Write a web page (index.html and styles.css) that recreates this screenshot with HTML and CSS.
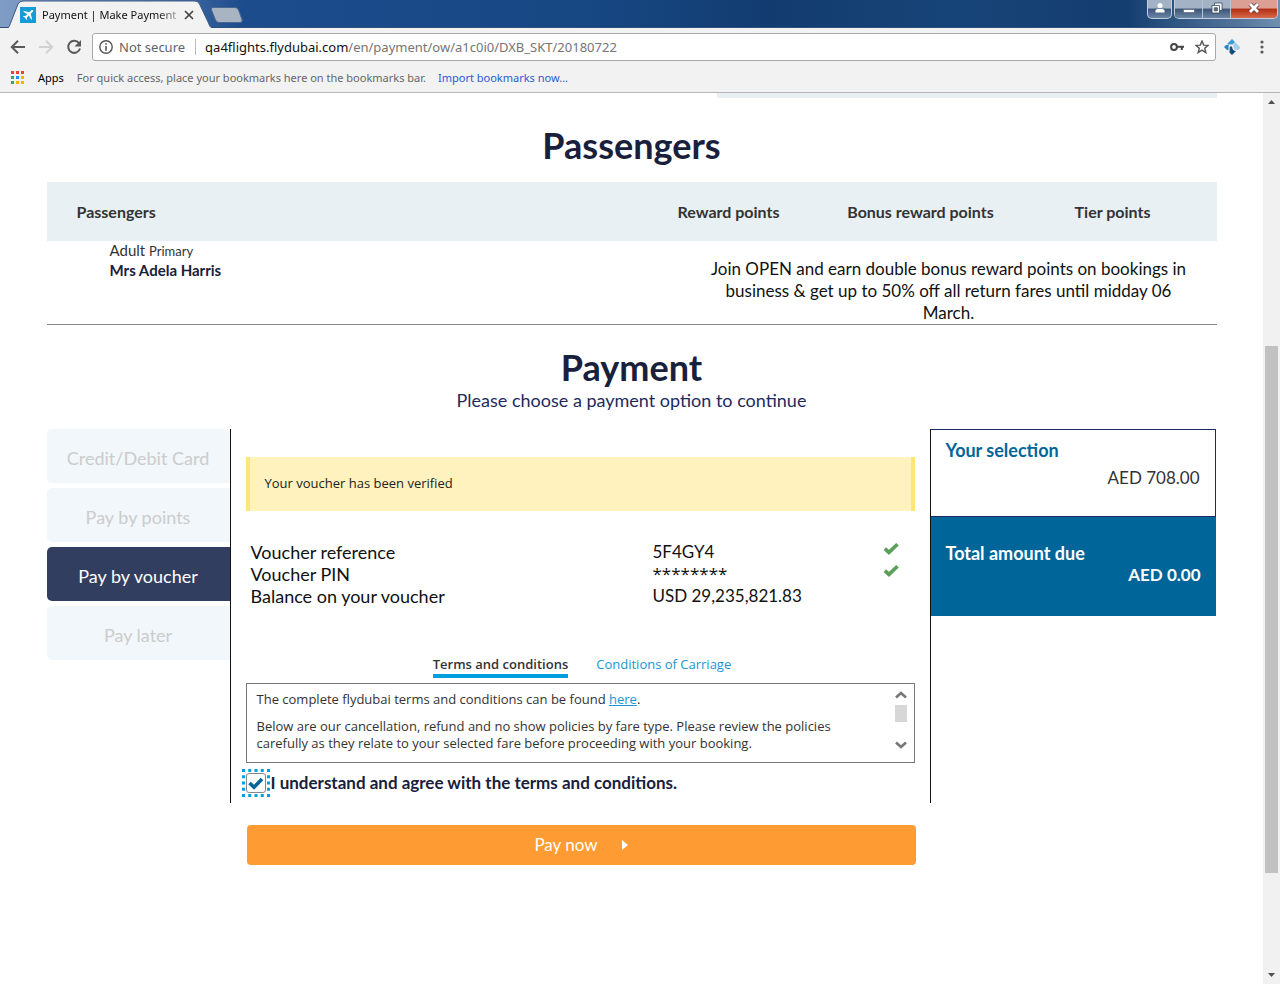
FILE: index.html
```html
<!DOCTYPE html>
<html lang="en">
<head>
<meta charset="utf-8">
<title>Payment | Make Payment</title>
<link rel="stylesheet" href="styles.css">
</head>
<body>
<header class="browser">
  <div class="titlebar">
    <div class="tab">
      <svg class="tab-shape" viewBox="0 0 212 28" aria-hidden="true"><path d="M0 29C5 29 5 27 7 22L14 4Q15.500 1 19 1H191Q194 1 195.500 4L204 22C206 27 207 29 212 29Z" fill="#f2f2f2" stroke="#3b5a85" stroke-width="1"/></svg>
      <svg class="favicon" viewBox="0 0 16 16" aria-hidden="true"><rect width="16" height="16" fill="#129cd8"/><path d="M13 3.200C12.400 2.600 11.500 3 11 3.500L9.300 5.200 4 4 3.200 4.800 7.400 7.100 5.400 9.100 3.700 8.900 3 9.600 5.200 10.800 6.400 13 7.100 12.300 6.900 10.600 8.900 8.600 11.200 12.800 12 12 10.800 6.700 12.500 5C13 4.500 13.500 3.800 13 3.200Z" fill="#fff"/></svg>
      <span class="tab-title">Payment | Make Payment</span>
      <button class="tab-close" aria-label="Close tab"><svg viewBox="0 0 10 10"><path d="M1 1 9 9M9 1 1 9" stroke="#444" stroke-width="1.700"/></svg></button>
    </div>
    <button class="new-tab" aria-label="New tab"><svg viewBox="0 0 34 16"><path d="M3 .5H25Q27.500.500 28.500 3L32 12.500Q33 15.500 30 15.500H9Q6.500 15.500 5.500 13L1.500 3Q.500.500 3 .5Z" fill="#a9b4c2" stroke="#4a668f"/></svg></button>
    <div class="window-buttons">
      <button class="win user" aria-label="User"><svg viewBox="0 0 12 12"><circle cx="6" cy="3.500" r="2.500" fill="#fff"/><path d="M1.500 10.500V8.500Q1.500 7 4 7H8Q10.500 7 10.500 8.500V10.500Z" fill="#fff"/></svg></button>
      <div class="win-group">
        <button class="win" aria-label="Minimize"><svg viewBox="0 0 12 12"><path d="M.5 7.500H11.500V10.500H.5Z" fill="#fff" stroke="#48586e" stroke-width=".6"/></svg></button>
        <button class="win" aria-label="Restore"><svg viewBox="0 0 12 12"><path d="M3.500 1H11V8.500H8.500V11H1V3.500H3.500Z" fill="#fff" stroke="#33445c" stroke-width=".8"/><path d="M3.500 3.500H8.500V8.500" fill="none" stroke="#33445c" stroke-width=".8"/><path d="M3.300 5.800H6.300V8.800H3.300Z" fill="#5d728f" stroke="#33445c" stroke-width=".8"/></svg></button>
        <button class="win close" aria-label="Close window"><svg viewBox="0 0 12 12"><path d="M2 2 10 10M10 2 2 10" stroke="#5a3038" stroke-width="4.400"/><path d="M2 2 10 10M10 2 2 10" stroke="#fff" stroke-width="3"/></svg></button>
      </div>
    </div>
  </div>
  <div class="toolbar">
    <button class="nav" aria-label="Back"><svg viewBox="0 0 16 16"><path d="M15 8H2M8 1.800 1.800 8 8 14.200" fill="none" stroke="#5a5a5a" stroke-width="2"/></svg></button>
    <button class="nav" aria-label="Forward"><svg viewBox="0 0 16 16"><path d="M1 8H14M8 1.800 14.200 8 8 14.200" fill="none" stroke="#d2d2d2" stroke-width="2"/></svg></button>
    <button class="nav" aria-label="Reload"><svg viewBox="0 0 16 16"><path d="M13 4.200A6 6 0 1 0 14 9.500" fill="none" stroke="#5a5a5a" stroke-width="2"/><path d="M15 1V7.500H8.500Z" fill="#5a5a5a"/></svg></button>
    <div class="address">
      <svg class="icon" viewBox="0 0 14 14" aria-hidden="true"><circle cx="7" cy="7" r="6.200" fill="none" stroke="#555" stroke-width="1.400"/><path d="M7 6V10.700M7 3.200V4.800" stroke="#555" stroke-width="1.600"/></svg>
      <span class="security">Not secure</span>
      <span class="url"><b>qa4flights.flydubai.com</b>/en/payment/ow/a1c0i0/DXB_SKT/20180722</span>
      <svg class="icon" viewBox="0 0 14 14" aria-hidden="true"><circle cx="4" cy="7" r="2.900" fill="none" stroke="#444" stroke-width="2"/><path d="M6.500 6.800H14M11.800 7V10" fill="none" stroke="#444" stroke-width="2"/></svg>
      <svg class="icon star" viewBox="0 0 14 14" aria-hidden="true"><path d="M7 1 8.700 5.100 13.100 5.400 9.700 8.200 10.800 12.600 7 10.200 3.200 12.600 4.300 8.200.9 5.400 5.300 5.100Z" fill="none" stroke="#555" stroke-width="1.400"/></svg>
    </div>
    <svg class="extension" viewBox="0 0 16 16" aria-hidden="true"><path d="M3.500 4.500 8 0 11 3 8.500 5.500H3.500Z" fill="#3d9bd4"/><path d="M8 0 16 8Q16 11 13 11 10 11 9.500 8V5.500L11 3Z" fill="#a3cdea"/><path d="M0 8 2 6H5Q4 8 4.500 11H3Z" fill="#2585c4"/><path d="M5.800 7.500H8Q8.500 12 12 12L8 16 5.500 13.500Z" fill="#134d80"/></svg>
    <button class="menu" aria-label="Menu"><svg viewBox="0 0 4 14"><circle cx="2" cy="2" r="1.600"/><circle cx="2" cy="7" r="1.600"/><circle cx="2" cy="12" r="1.600"/></svg></button>
  </div>
  <nav class="bookmarks" aria-label="Bookmarks">
    <svg class="apps" viewBox="0 0 13 13" aria-hidden="true"><path d="M0 0h3v3H0zM5 0h3v3H5zM10 0h3v3h-3z" fill="#ea4335"/><path d="M0 5h3v3H0zM0 10h3v3H0z" fill="#34a853"/><path d="M5 5h3v3H5z" fill="#2b8cf0"/><path d="M10 5h3v3h-3zM5 10h3v3H5zM10 10h3v3h-3z" fill="#fbaf08"/></svg>
    <span class="apps-label">Apps</span>
    <span>For quick access, place your bookmarks here on the bookmarks bar.</span>
    <a href="#">Import bookmarks now...</a>
  </nav>
</header>
<div class="viewport">
  <main class="page">
    <div class="container">
      <div class="strip"></div>
      <h1>Passengers</h1>
      <table class="passengers">
        <thead><tr><th scope="col">Passengers</th><th scope="col">Reward points</th><th scope="col">Bonus reward points</th><th scope="col">Tier points</th></tr></thead>
        <tbody><tr>
          <td class="person">Adult <small>Primary</small><br><strong>Mrs Adela Harris</strong></td>
          <td class="promo" colspan="3">Join OPEN and earn double bonus reward points on bookings in business &amp; get up to 50% off all return fares until midday 06 March.</td>
        </tr></tbody>
      </table>
      <h1 class="payment-title">Payment</h1>
      <p class="lead">Please choose a payment option to continue</p>
      <div class="payment">
        <div class="methods">
          <button class="method" disabled>Credit/Debit Card</button>
          <button class="method" disabled>Pay by points</button>
          <button class="method active">Pay by voucher</button>
          <button class="method" disabled>Pay later</button>
        </div>
        <section class="panel">
          <p class="notice" role="status">Your voucher has been verified</p>
          <table class="voucher">
            <tr><th scope="row">Voucher reference</th><td>5F4GY4</td><td class="ok"><svg viewBox="0 0 14 12"><path d="M1.600 5.700 5.200 9 12.700 1.800" fill="none" stroke="#5b9f5b" stroke-width="3.200"/></svg></td></tr>
            <tr><th scope="row">Voucher PIN</th><td class="pin">********</td><td class="ok"><svg viewBox="0 0 14 12"><path d="M1.600 5.700 5.200 9 12.700 1.800" fill="none" stroke="#5b9f5b" stroke-width="3.200"/></svg></td></tr>
            <tr><th scope="row">Balance on your voucher</th><td>USD 29,235,821.83</td><td></td></tr>
          </table>
          <div class="term-tabs">
            <button class="term-tab selected">Terms and conditions</button>
            <button class="term-tab">Conditions of Carriage</button>
          </div>
          <div class="terms">
            <div class="terms-text">
              <p>The complete flydubai terms and conditions can be found <a href="#">here</a>.</p>
              <p>Below are our cancellation, refund and no show policies by fare type. Please review the policies carefully as they relate to your selected fare before proceeding with your booking.</p>
            </div>
            <div class="terms-scroll" aria-hidden="true">
              <svg viewBox="0 0 12 8"><path d="M1 6.500 6 2 11 6.500" fill="none" stroke="#777" stroke-width="2.600"/></svg>
              <span></span>
              <svg viewBox="0 0 12 8"><path d="M1 1.500 6 6 11 1.500" fill="none" stroke="#777" stroke-width="2.600"/></svg>
            </div>
          </div>
          <div class="agree">
            <span class="check">
              <input type="checkbox" id="agree" checked>
              <svg viewBox="0 0 28 28" aria-hidden="true"><rect x="1.500" y="1.500" width="25" height="25" fill="none" stroke="#00a0df" stroke-width="3" stroke-dasharray="3 3.250" stroke-dashoffset="1.500"/><path d="M7.500 14 12 18.300 20 10" fill="none" stroke="#006699" stroke-width="3.600"/></svg>
            </span>
            <label for="agree">I understand and agree with the terms and conditions.</label>
          </div>
        </section>
        <aside class="summary">
          <div class="selection"><h2>Your selection</h2><p>AED 708.00</p></div>
          <div class="total"><h2>Total amount due</h2><p>AED 0.00</p></div>
        </aside>
        <button class="pay">Pay now <svg viewBox="0 0 6 10" aria-hidden="true"><path d="M0 0 6 5 0 10Z" fill="#fff"/></svg></button>
      </div>
    </div>
  </main>
  <div class="scrollbar" aria-hidden="true">
    <svg viewBox="0 0 17 17"><path d="M5 11 8.500 7 12 11Z" fill="#505050"/></svg>
    <span class="above"></span><span class="thumb"></span><span class="below"></span>
    <svg viewBox="0 0 17 17"><path d="M5 6 8.500 10 12 6Z" fill="#505050"/></svg>
  </div>
</div>
</body>
</html>
```
FILE: styles.css
```css
* { box-sizing: border-box; }
body { margin: 0; height: 100vh; display: flex; flex-direction: column; font-family: Lato, "Open Sans", sans-serif; font-size: 17px; line-height: 22px; color: #111; background: #fff; overflow: hidden; }
button { font: inherit; color: inherit; border: 0; padding: 0; margin: 0; background: none; }
p, h1, h2 { margin: 0; }
svg { display: block; }

.browser { flex: none; font-family: "Noto Sans", sans-serif; background: #f2f2f2; border-bottom: 1px solid #b6b4b6; }
.titlebar { display: flex; height: 28px; padding-left: 4px; background: linear-gradient(90deg, #7f9cc4 0, #5d80b2 10%, #1c4c8c 19%, #174884 45%, #123c70 60%, #174478 75%, #143d70 88%, #55779c 97%, #7090b0 100%); border-bottom: 1px solid #2f507c; }
.tab { position: relative; display: flex; align-items: center; width: 206px; padding: 1px 10px 0 16px; gap: 6px; font-size: 11px; height: 28px; }
.tab > * { position: relative; }
.tab .tab-shape { position: absolute; left: 0; top: 0; width: 212px; height: 28px; }
.favicon { flex: none; width: 16px; height: 16px; }
.tab-title { flex: none; width: 136px; white-space: nowrap; mask-image: linear-gradient(90deg, #000 85%, rgba(0, 0, 0, .3)); }
.tab-close { width: 10px; height: 10px; }
.new-tab { width: 34px; height: 16px; margin-top: 7px; }
.window-buttons { display: flex; gap: 2px; margin-left: auto; padding-right: 2px; }
.win { display: flex; align-items: center; justify-content: center; width: 28px; height: 18px; padding-bottom: 2px; background: linear-gradient(#a4b2c5 45%, #3b5678 50%, #6c86a4); border-right: 1px solid #b6c4d5; }
.win svg { width: 12px; height: 12px; }
.win.user, .win-group { width: 25px; height: 19px; border: 1px solid #c2cedd; border-top: 0; border-radius: 0 0 5px 5px; overflow: hidden; }
.win-group { display: flex; width: 104px; }
.win.close { flex: 1; border: 0; background: linear-gradient(#dba093 45%, #b32d13 50%, #d7694c); }
.toolbar { display: flex; align-items: center; height: 37px; padding: 0 16px 0 10px; }
.nav { width: 16px; height: 16px; margin-right: 12px; }
.nav:nth-child(3) { margin-right: 10px; }
.address { flex: 1; display: flex; align-items: center; height: 28px; padding: 0 6px; border: 1px solid #a9a9a9; border-radius: 3px; background: #fff; font-size: 13px; color: #5f6368; }
.address .icon { flex: none; width: 14px; height: 14px; }
.security { padding: 0 10px 0 6px; border-right: 1px solid #bbb; line-height: 16px; }
.url { flex: 1; padding-left: 9px; color: #757575; }
.url b { font-weight: 400; color: #111; }
.address .star { margin-left: 11px; }
.extension { width: 16px; height: 16px; margin-left: 8px; }
.menu { width: 4px; height: 14px; margin-left: 20px; fill: #5a5a5a; }
.bookmarks { display: flex; align-items: center; height: 27px; padding: 0 11px 2px; font-size: 11px; color: #666; }
.apps { width: 13px; height: 13px; }
.apps-label { margin: 0 13px 0 14px; color: #000; }
.bookmarks a { margin-left: 12px; color: #2a5bd0; text-decoration: none; }

.viewport { flex: 1; min-height: 0; display: flex; }
.page { flex: 1; min-width: 0; overflow: hidden; }
.container { max-width: 1170px; margin: 0 auto; }
.strip { width: 500px; height: 5px; margin-left: auto; background: #e8f0f3; }
h1 { color: #19203c; font-size: 36px; line-height: 44px; font-weight: 700; text-align: center; padding-top: 25px; }
.payment-title { padding-top: 20px; }
.passengers { width: 100%; margin-top: 15px; border-collapse: collapse; border-bottom: 1px solid #888; }
.passengers th { width: 192px; height: 59px; padding: 0; background: #e8f0f3; color: #333; font-size: 16px; font-weight: 700; }
.passengers th:first-child { width: auto; padding-left: 30px; text-align: left; }
.passengers th:last-child { width: 200px; padding-right: 8px; }
.person { vertical-align: top; padding: 0 0 0 63px; font-size: 15px; line-height: 19px; color: #333; }
.person small { font-size: 13px; }
.person strong { color: #19203c; }
.promo { padding: 17px 24px 0 72px; text-align: center; color: #111; }
.lead { font-size: 18px; text-align: center; color: #1e2a5c; }

.payment { display: grid; grid-template-columns: 183px minmax(0, 1fr) 286px; margin-top: 18px; }
.methods { display: flex; flex-direction: column; gap: 5px; font-size: 18px; }
.method { height: 54px; padding-top: 3px; border-radius: 5px 0 0 5px; background: #f1f7fa; color: #ccc; }
.method.active { background: #323e60; color: #fff; }
.panel { border: 1px solid #111; border-width: 0 1px; padding: 28px 15px 5px; }
.notice { padding: 15px 15px 17px; border: 4px solid #ffe57a; border-width: 0 4px; background: #fff2bf; font-family: "Open Sans", sans-serif; font-size: 13px; color: #222; }
.voucher { width: 100%; margin-top: 30px; border-collapse: collapse; }
.voucher th, .voucher td { padding: 0; text-align: left; font-weight: 400; }
.voucher th { width: 407px; padding-left: 5px; font-size: 18px; }
.voucher .pin { font-family: "Open Sans", sans-serif; }
.voucher .ok { width: 32px; vertical-align: top; }
.ok svg { width: 16px; height: 14px; margin-top: 1px; }
.term-tabs { display: flex; justify-content: center; gap: 28px; margin: 46px 0 5px; padding-left: 4px; font-family: "Open Sans", sans-serif; font-size: 13px; }
.term-tab { height: 25px; border-bottom: 4px solid transparent; color: #1a96d4; }
.term-tab.selected { border-color: #00a0df; color: #333; font-weight: 600; }
.terms { display: flex; justify-content: space-between; height: 80px; padding: 7px; border: 1px solid #777; font-family: "Open Sans", sans-serif; font-size: 13px; line-height: 17px; color: #333; }
.terms-text { max-width: 600px; padding-left: 3px; }
.terms-text p + p { margin-top: 10px; }
.terms a { color: #1a96d4; }
.terms-scroll { display: flex; flex-direction: column; width: 12px; }
.terms-scroll svg { width: 12px; height: 8px; }
.terms-scroll span { height: 17px; margin: 6px 0 19px; background: #d7d7d7; }
.agree { display: flex; align-items: center; height: 30px; margin-top: 5px; color: #19203c; font-weight: 700; }
.check { position: relative; width: 25px; height: 20px; }
.check input { appearance: none; display: block; width: 20px; height: 20px; margin: 0; border: 1px solid #888; border-radius: 3px; background: #fff; }
.check svg { position: absolute; left: -4px; top: -4px; width: 28px; height: 28px; pointer-events: none; }
.summary { align-self: start; margin-left: -1px; margin-right: 1px; border: 1px solid #1c2a63; border-width: 1px 1px 0; border-left-color: #111; }
.summary h2 { font-size: 18px; line-height: 22px; }
.summary p { text-align: right; }
.selection { height: 87px; padding: 9px 15px; border-bottom: 1px solid #1c2a63; color: #333; }
.selection h2 { color: #006699; margin-bottom: 6px; }
.total { height: 99px; margin-right: -1px; padding: 25px 15px; background: #006699; color: #fff; font-weight: 700; }
.pay { grid-column: 2; display: flex; align-items: center; justify-content: center; gap: 24px; height: 40px; margin: 22px 15px 0 17px; border-radius: 4px; background: #ff9b33; color: #fff; }
.pay svg { width: 6px; height: 10px; }

.scrollbar { flex: none; display: flex; flex-direction: column; width: 17px; background: #f1f1f1; }
.scrollbar svg { width: 17px; height: 17px; }
.thumb { flex: 527; margin: 0 2px; background: #c1c1c1; }
.above { flex: 236; }
.below { flex: 94; }
```
